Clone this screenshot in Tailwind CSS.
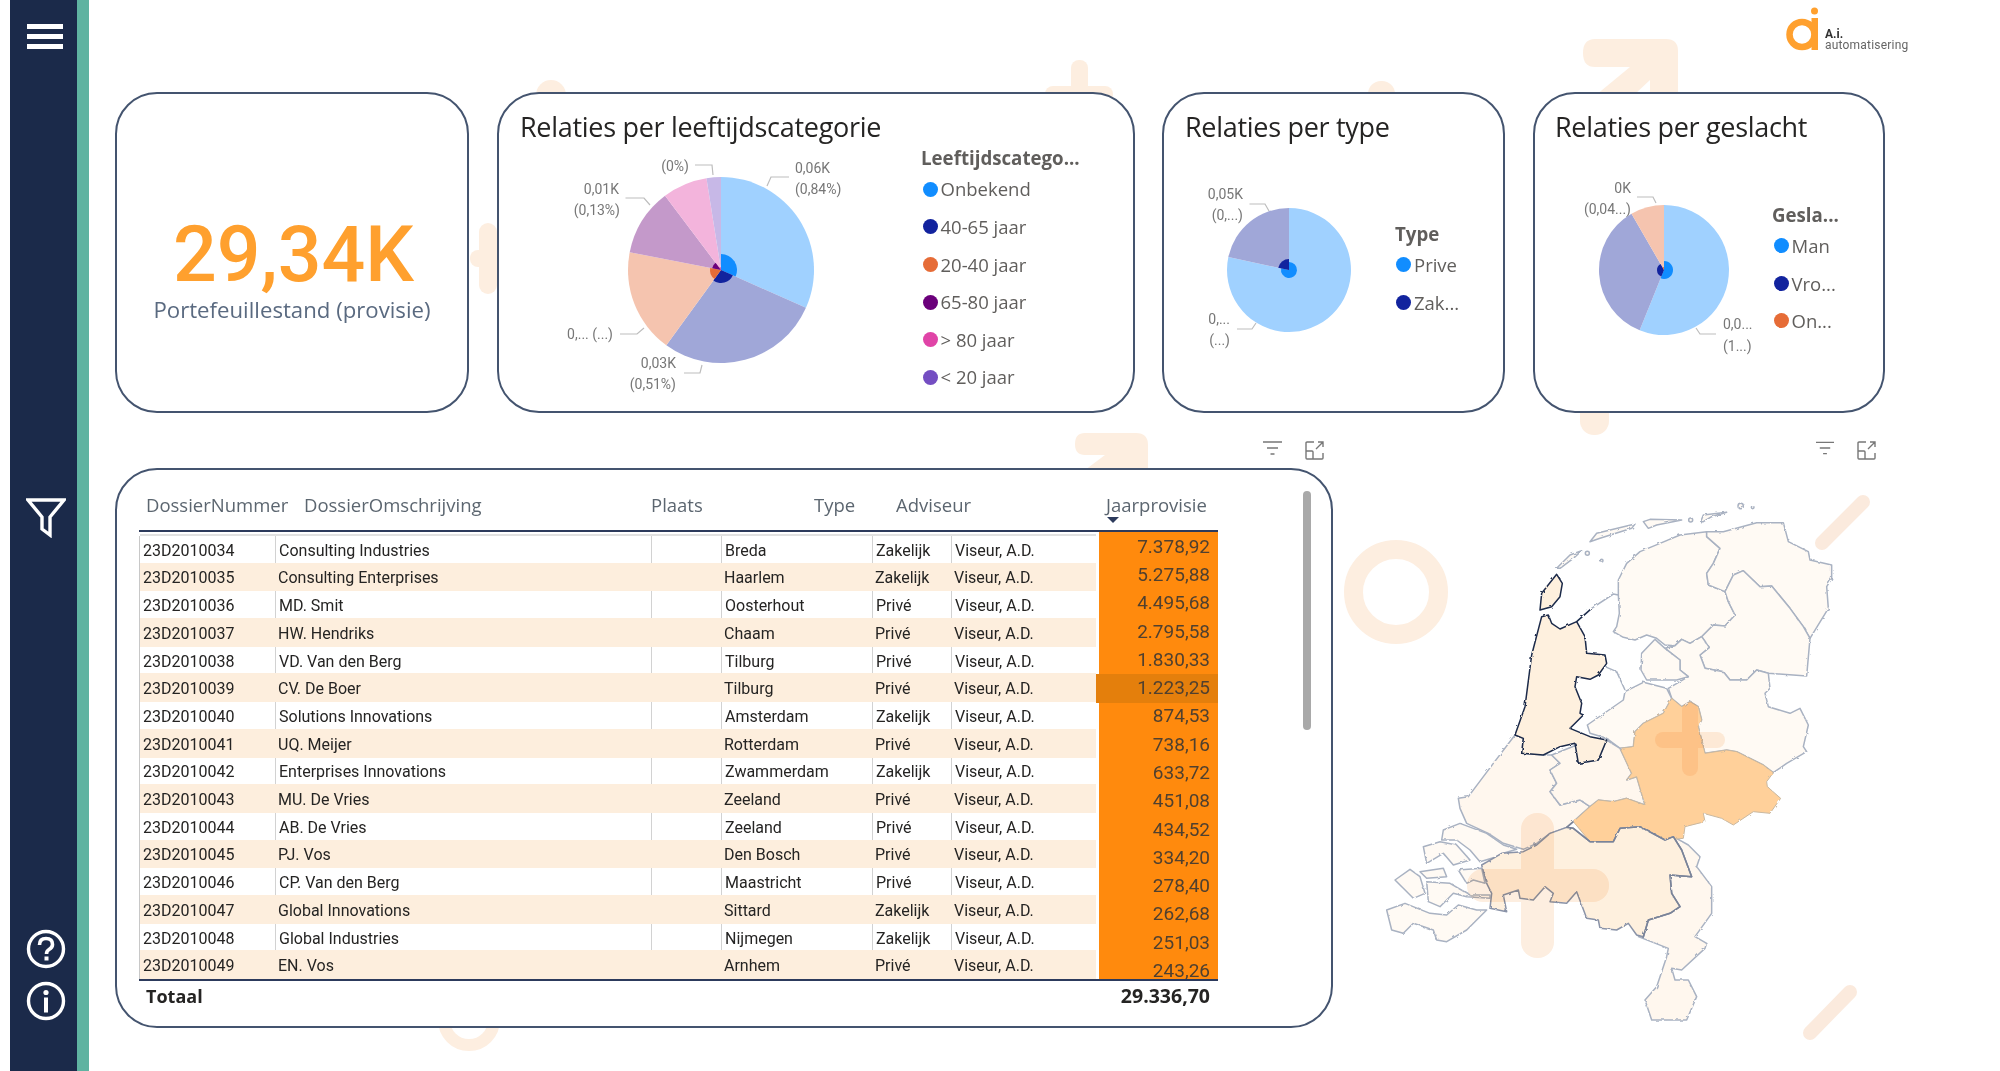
<!DOCTYPE html>
<html lang="en">
<head>
    <meta charset="UTF-8">
    <title>Portefeuille dashboard</title>
    <script src="https://cdn.jsdelivr.net/npm/@tailwindcss/browser@4"></script>
</head>
<body class="bg-white">
<div class="relative isolate flex w-[2000px] h-[1071px] overflow-hidden bg-white font-['Open_Sans',sans-serif]">

    <!-- background shapes -->
    <svg class="absolute left-0 top-0 z-0" width="2000" height="1071" fill="#fdeee0">
        <rect x="1071" y="60" width="17" height="70" rx="8"/><rect x="1045" y="86" width="68" height="17" rx="8"/>
        <rect x="479" y="223" width="18" height="71" rx="9"/><rect x="470" y="250" width="40" height="17" rx="8"/>
        <rect x="536" y="80" width="30" height="60" rx="15"/><rect x="1368" y="81" width="27" height="40" rx="13"/>
        <path d="M1595 39H1666Q1678 39 1678 51V120H1650V80L1607 120 1590 100 1630 67H1595Q1583 67 1583 53T1595 39Z"/>
        <rect x="1580" y="395" width="29" height="40" rx="14"/>
        <path d="M1085 433H1136Q1148 433 1148 445V490H1120V470L1100 490 1085 470 1105 455H1085Q1075 455 1075 444T1085 433Z"/>
        <circle cx="1396" cy="592" r="42.5" fill="none" stroke="#fdeee0" stroke-width="19"/>
        <circle cx="469" cy="1020" r="25" fill="none" stroke="#fdeee0" stroke-width="12"/>
        <path d="M1822 543 1863 502M1810 1033 1850 992" stroke="#fbeadd" stroke-width="14" stroke-linecap="round"/>
        <rect x="1521" y="813" width="33" height="145" rx="16"/><rect x="1467" y="869" width="142" height="33" rx="16"/>
        <rect x="1682" y="702" width="16" height="74" rx="8"/><rect x="1655" y="732" width="70" height="16" rx="8"/>
    </svg>

    <!-- sidebar -->
    <div class="ml-[10px] w-[67px] h-full bg-[#1b2a4a] flex flex-col pl-[17px] pt-[24px] pb-[50px]">
        <div class="flex flex-col gap-[5px] w-[36px]">
            <div class="h-[5px] bg-white"></div>
            <div class="h-[5px] bg-white"></div>
            <div class="h-[5px] bg-white"></div>
        </div>
        <svg class="mt-[448px] -ml-[1px]" width="40" height="41" viewBox="0 0 40 41" fill="none" stroke="white" stroke-width="3.4" stroke-linejoin="miter">
            <path d="M2 3H38L24 20V38L16 32V20Z"/>
        </svg>
        <svg class="mt-auto -ml-[1px]" width="40" height="40" viewBox="0 0 40 40" fill="none" stroke="white">
            <circle cx="20" cy="20" r="17.5" stroke-width="3.4"/>
            <path d="M13.5 16Q13.5 9.5 20 9.5T26.5 15.5Q26.5 18.5 23 20.5 20.500 22 20.500 25" stroke-width="3.6"/>
            <rect x="18.500" y="27.500" width="4" height="4" fill="white" stroke="none"/>
        </svg>
        <svg class="mt-[12px] -ml-[1px]" width="40" height="40" viewBox="0 0 40 40" fill="none" stroke="white">
            <circle cx="20" cy="20" r="17.5" stroke-width="3.4"/>
            <rect x="18" y="16.500" width="4" height="15" fill="white" stroke="none"/>
            <circle cx="20" cy="11.500" r="2.600" fill="white" stroke="none"/>
        </svg>
    </div>
    <div class="w-[12px] h-full bg-[#5fb3a1]"></div>

    <!-- main -->
    <div class="flex-1 pl-[26px] pt-[92px]">

        <!-- logo -->
        <div class="absolute left-[1785px] top-[6px] z-10 flex items-end">
            <svg width="36" height="46" viewBox="1785 6 36 46" fill="none">
                <circle cx="1802" cy="34.500" r="12.500" stroke="#ffa02e" stroke-width="6.500"/>
                <rect x="1811.500" y="18" width="6.500" height="32" fill="#ffa02e"/>
                <circle cx="1814.500" cy="11" r="3.500" fill="#ffa02e"/>
            </svg>
            <div class="ml-[4px] mb-[1px] font-['Roboto',sans-serif] text-[#666] leading-[11px]">
                <div class="text-[12px] font-bold text-[#333]">A.i.</div>
                <div class="text-[12px] tracking-[0.2px]">automatisering</div>
            </div>
        </div>

        <!-- top cards -->
        <div class="flex h-[321px] text-[#252423]">
            <div class="relative z-10 w-[354px] h-full bg-white border-2 border-[#44546f] rounded-[42px] flex flex-col items-center">
                <div class="mt-[125px] font-['Roboto',sans-serif] font-medium text-[77px] leading-[72px] text-[#ffa02e] pl-[3px]">29,34K</div>
                <div class="mt-[4px] text-[22.2px] leading-[30px] text-[#5a6a80]">Portefeuillestand (provisie)</div>
            </div>

            <div class="relative z-10 ml-[28px] w-[638px] h-full bg-white border-2 border-[#44546f] rounded-[42px]">
                <div class="pl-[21px] pt-[14px] text-[27px] leading-[38px] tracking-[-0.3px]">Relaties per leeftijdscategorie</div>
                <div class="flex">
                    <svg id="pie-age" width="420" height="265" viewBox="499 146 420 265" class="shrink-0 font-['Roboto',sans-serif] text-[14px]" fill="#777">
                        <g fill="none" stroke="#bdbdbd" stroke-width="1.200">
                            <path d="M767 186 771 177H789M625.500 198H644L650 205M695 165H712L713 175M620 334H637L644 328M684 373H700L702 365"/>
                        </g>
                        <text x="795" y="173">0,06K</text><text x="795" y="194">(0,84%)</text>
                        <text x="619" y="194" text-anchor="end">0,01K</text><text x="620" y="215" text-anchor="end">(0,13%)</text>
                        <text x="689" y="171" text-anchor="end">(0%)</text>
                        <text x="613" y="339" text-anchor="end">0,... (...)</text>
                        <text x="676" y="368" text-anchor="end">0,03K</text><text x="676" y="389" text-anchor="end">(0,51%)</text>
                    </svg>
                    <div class="pl-[2px] text-[#605e5c]">
                        <div class="text-[18.7px] leading-[24px] font-bold">Leeftijdscatego...</div>
                        <div class="flex items-center h-[37.6px] pt-[1px] text-[18.500px]"><span class="w-[15px] h-[15px] rounded-full bg-[#118dff] ml-[1.500px] mr-[3px]"></span>Onbekend</div>
                        <div class="flex items-center h-[37.6px] pt-[1px] text-[18.500px]"><span class="w-[15px] h-[15px] rounded-full bg-[#12239e] ml-[1.500px] mr-[3px]"></span>40-65 jaar</div>
                        <div class="flex items-center h-[37.6px] pt-[1px] text-[18.500px]"><span class="w-[15px] h-[15px] rounded-full bg-[#e66c37] ml-[1.500px] mr-[3px]"></span>20-40 jaar</div>
                        <div class="flex items-center h-[37.6px] pt-[1px] text-[18.500px]"><span class="w-[15px] h-[15px] rounded-full bg-[#6b007b] ml-[1.500px] mr-[3px]"></span>65-80 jaar</div>
                        <div class="flex items-center h-[37.6px] pt-[1px] text-[18.500px]"><span class="w-[15px] h-[15px] rounded-full bg-[#e044a7] ml-[1.500px] mr-[3px]"></span>&gt; 80 jaar</div>
                        <div class="flex items-center h-[37.6px] pt-[1px] text-[18.500px]"><span class="w-[15px] h-[15px] rounded-full bg-[#744ec2] ml-[1.500px] mr-[3px]"></span>&lt; 20 jaar</div>
                    </div>
                </div>
            </div>

            <div class="relative z-10 ml-[27px] w-[343px] h-full bg-white border-2 border-[#44546f] rounded-[42px]">
                <div class="pl-[21px] pt-[14px] text-[27px] leading-[38px] tracking-[-0.3px]">Relaties per type</div>
                <div class="flex">
                    <svg id="pie-type" width="223" height="265" viewBox="1164 146 223 265" class="shrink-0 font-['Roboto',sans-serif] text-[14px]" fill="#777">
                        <path d="M1249.500 204H1265L1269 211M1237 329H1252L1256 323" fill="none" stroke="#bdbdbd" stroke-width="1.200"/>
                        <text x="1243" y="199" text-anchor="end">0,05K</text><text x="1243" y="220" text-anchor="end">(0,...)</text>
                        <text x="1230" y="324" text-anchor="end">0,...</text><text x="1230" y="345" text-anchor="end">(...)</text>
                    </svg>
                    <div class="pl-[8px] pt-[76px] text-[#605e5c]">
                        <div class="text-[18.7px] leading-[24px] font-bold">Type</div>
                        <div class="flex items-center h-[37.6px] text-[18.500px]"><span class="w-[15px] h-[15px] rounded-full bg-[#118dff] ml-[1px] mr-[3px]"></span>Prive</div>
                        <div class="flex items-center h-[37.6px] text-[18.500px]"><span class="w-[15px] h-[15px] rounded-full bg-[#12239e] ml-[1px] mr-[3px]"></span>Zak...</div>
                    </div>
                </div>
            </div>

            <div class="relative z-10 ml-[28px] w-[352px] h-full bg-white border-2 border-[#44546f] rounded-[42px]">
                <div class="pl-[20px] pt-[14px] text-[27px] leading-[38px] tracking-[-0.3px]">Relaties per geslacht</div>
                <div class="flex">
                    <svg id="pie-sex" width="237" height="265" viewBox="1535 146 237 265" class="shrink-0 font-['Roboto',sans-serif] text-[14px]" fill="#777">
                        <path d="M1637 197H1653L1656 203M1696 328 1700 334H1716" fill="none" stroke="#bdbdbd" stroke-width="1.200"/>
                        <text x="1631" y="193" text-anchor="end">0K</text><text x="1631" y="214" text-anchor="end">(0,04...)</text>
                        <text x="1723" y="329">0,0...</text><text x="1723" y="351">(1...)</text>
                    </svg>
                    <div class="pt-[57px] text-[#605e5c]">
                        <div class="text-[18.7px] leading-[24px] font-bold">Gesla...</div>
                        <div class="flex items-center h-[37.6px] text-[18.500px]"><span class="w-[15px] h-[15px] rounded-full bg-[#118dff] ml-[1.500px] mr-[3px]"></span>Man</div>
                        <div class="flex items-center h-[37.6px] text-[18.500px]"><span class="w-[15px] h-[15px] rounded-full bg-[#12239e] ml-[1.500px] mr-[3px]"></span>Vro...</div>
                        <div class="flex items-center h-[37.6px] text-[18.500px]"><span class="w-[15px] h-[15px] rounded-full bg-[#e66c37] ml-[1.500px] mr-[3px]"></span>On...</div>
                    </div>
                </div>
            </div>
        </div>

        <div class="flex">
            <!-- table column -->
            <div class="w-[1218px] shrink-0">
                <div class="relative z-10 h-[55px] flex justify-end items-end gap-[23px] pr-[9px] pb-[8px]">
                    <svg class="mb-[5px]" width="19" height="14" viewBox="0 0 19 14" fill="none" stroke="#777" stroke-width="1.400"><path d="M0 1H19M4 7H15M7.500 13H11.500"/></svg>
                    <svg width="19" height="19" viewBox="0 0 19 19" fill="none" stroke="#777" stroke-width="1.400"><path d="M9 1H2Q1 1 1 2V17Q1 18 2 18H17Q18 18 18 17V12M1 10H7Q8 10 8 11V18M11 8 18 1M13 1H18V6"/></svg>
                </div>
                <div class="relative z-10 h-[560px] bg-white border-2 border-[#44546f] rounded-[42px] pl-[22px] font-['Roboto',sans-serif]">
                    <div class="flex h-[62px] w-[1079px] pt-[10px] items-center border-b-2 border-[#2c3a5c] text-[18.500px] text-[#5c6670] font-['Open_Sans',sans-serif]">
                        <div class="w-[158px] pl-[7px]">DossierNummer</div>
                        <div class="w-[347px] pl-[7px]">DossierOmschrijving</div>
                        <div class="w-[163px] pl-[7px]">Plaats</div>
                        <div class="w-[82px] pl-[7px]">Type</div>
                        <div class="w-[210px] pl-[7px]">Adviseur</div>
                        <div class="relative w-[119px] pl-[7px]">Jaarprovisie
                            <svg class="absolute left-[8px] top-[26px]" width="12" height="6"><path d="M0 0H12L6 6Z" fill="#2c3a5c"/></svg>
                        </div>
                    </div>
                    <div class="flex h-[447px] w-[1079px] overflow-hidden">
                        <div class="w-[957px] pt-[2px] shrink-0">
                            <div class="h-[2px] ml-[1px] bg-[#e1e1e1]"></div>
                            <div id="rows" class="text-[16px] text-[#252423]"></div>
                        </div>
                        <div id="amounts" class="ml-[3px] w-[119px] h-full bg-[#ff8a0d] pt-[1px] text-[19px] text-[#50402f]"></div>
                    </div>
                    <div class="flex items-center h-[32px] w-[1079px] border-t-2 border-[#2c3a5c] font-bold text-[#252423] pl-[7px] pr-[8px] justify-between font-['Open_Sans',sans-serif]">
                        <span class="text-[18px]">Totaal</span><span class="text-[19.500px]">29.336,70</span>
                    </div>
                    <div class="absolute right-[20px] top-[21px] w-[8px] h-[239px] rounded-full bg-[#a9a9a9]"></div>
                </div>
            </div>

            <!-- map column -->
            <div class="flex-1">
                <div class="relative z-10 h-[55px] flex justify-end items-end gap-[23px] pr-[124px] pb-[8px]">
                    <svg class="mb-[5px]" width="18" height="14" viewBox="0 0 19 14" fill="none" stroke="#777" stroke-width="1.400"><path d="M0 1H19M4 7H15M7.500 13H11.500"/></svg>
                    <svg width="19" height="19" viewBox="0 0 19 19" fill="none" stroke="#777" stroke-width="1.400"><path d="M9 1H2Q1 1 1 2V17Q1 18 2 18H17Q18 18 18 17V12M1 10H7Q8 10 8 11V18M11 8 18 1M13 1H18V6"/></svg>
                </div>
                <svg class="relative z-10 mix-blend-multiply ml-[27px] mt-[12px]" width="520" height="591" viewBox="0 0 1560 1773" stroke-linejoin="round">
                    <defs>
                        <filter id="rough" x="-5%" y="-5%" width="110%" height="110%">
                            <feTurbulence type="fractalNoise" baseFrequency="0.07" numOctaves="2" seed="4"/>
                            <feDisplacementMap in="SourceGraphic" scale="8"/>
                        </filter>
                    </defs>
                    <g filter="url(#rough)" stroke="#a9b2c2" stroke-width="4.500" fill="#fffaf4">
                        <polygon points="1040,155 960,165 900,190 840,215 800,250 775,300 775,345 778,400 770,440 760,455 790,472 825,480 860,465 890,475 915,495 945,497 965,478 990,490 1025,470 1060,435 1095,438 1125,405 1105,365 1095,335 1045,315 1040,280 1060,250 1080,205 1040,170"/>
                        <polygon points="1040,155 1090,155 1190,128 1270,128 1285,185 1345,215 1350,240 1415,255 1415,295 1400,320 1405,385 1350,475 1330,440 1290,385 1235,318 1200,320 1150,272 1120,285 1095,335 1045,315 1040,280 1060,250 1080,205 1040,170"/>
                        <polygon points="1095,335 1120,285 1150,272 1200,320 1235,318 1290,385 1330,440 1350,475 1340,588 1225,580 1190,570 1160,600 1110,600 1090,575 1035,565 1020,525 1048,502 1025,470 1060,435 1095,438 1125,405 1105,365"/>
                        <polygon points="1025,470 1048,502 1020,525 1035,565 1090,575 1110,600 1160,600 1190,570 1225,580 1230,625 1215,640 1225,680 1290,700 1320,685 1345,735 1330,800 1340,815 1280,850 1240,878 1210,855 1130,815 1100,810 1035,820 1015,740 1025,720 1015,680 990,665 965,680 935,655 925,625 985,590 960,570 960,540 915,505 945,497 965,478 990,490"/>
                        <polygon points="845,520 885,478 915,505 960,540 960,570 985,590 950,600 860,600 843,570"/>
                        <polygon points="682,735 790,660 795,635 850,607 920,625 935,655 910,700 850,730 825,755 820,800 780,805 740,775 690,760"/>
                        <polygon points="590,265 630,225 665,212 640,235 600,265"/>
                        <polygon points="690,185 710,160 825,132 815,145 720,175"/>
                        <polygon points="850,125 870,118 965,120 890,135 865,145"/>
                        <polygon points="1022,125 1030,105 1100,97 1055,110 1030,125"/>
                        <circle cx="1142" cy="78" r="8"/><circle cx="1178" cy="82" r="4"/><circle cx="725" cy="242" r="4"/><circle cx="682" cy="220" r="6"/><circle cx="992" cy="120" r="6"/>
                        <path d="M695 385 760 342 775 345M735 560 770 575 795 630" fill="none"/>
                        <polygon fill="#fff7ee" points="465,765 490,775 485,820 550,825 575,825 600,850 570,870 590,910 570,935 600,975 660,960 690,980 640,1025 620,1042 570,1060 530,1090 490,1108 430,1090 385,1060 320,1030 300,985 295,955 325,950 400,850"/>
                        <polygon fill="#fff7ee" points="575,825 650,795 655,850 715,840 740,780 780,805 815,880 800,900 830,890 855,975 800,955 760,965 715,960 690,980 660,960 600,975 570,935 590,910 570,870 600,850"/>
                        <polygon points="250,1050 300,1030 380,1060 430,1095 470,1108 430,1120 410,1130 360,1145 330,1110 290,1080 245,1080"/>
                        <polygon points="190,1100 240,1085 290,1095 330,1140 280,1155 250,1120 200,1150"/>
                        <polygon points="180,1175 250,1165 260,1190 200,1195"/>
                        <polygon points="105,1200 150,1168 180,1190 195,1240 160,1255"/>
                        <polygon points="200,1205 270,1210 330,1245 390,1245 390,1255 320,1250 280,1240 240,1280 205,1265"/>
                        <polygon points="295,1170 365,1165 375,1210 340,1200 320,1210"/>
                        <polygon points="80,1290 135,1270 210,1300 260,1305 295,1275 350,1290 380,1290 320,1350 260,1385 230,1380 220,1350 160,1330 130,1360 95,1350"/>
                        <polygon fill="#fff7ee" points="940,1070 985,1095 1020,1130 1010,1160 1055,1220 1055,1300 1005,1370 1040,1390 1035,1405 965,1470 935,1465 945,1500 985,1500 1010,1550 980,1620 875,1620 855,1560 890,1520 920,1430 925,1405 835,1370 850,1370 865,1320 930,1300 960,1280 935,1240 930,1185 995,1190 965,1110"/>
                        <polygon fill="#ffd09a" stroke="#c9b8a0" stroke-width="3" points="935,655 965,680 990,665 1015,680 1025,720 1015,740 1035,820 1100,810 1130,815 1210,855 1240,878 1220,905 1222,920 1262,955 1230,1000 1180,995 1120,1035 1085,1015 1030,1000 1035,1025 975,1040 970,1075 915,1080 840,1040 780,1045 760,1085 690,1085 640,1025 690,980 715,960 760,965 800,955 855,975 830,890 800,900 815,880 780,805 820,800 825,755 850,730 910,700"/>
                        <polygon fill="#fef0de" stroke="#8a93a8" points="365,1155 425,1120 490,1115 530,1095 570,1060 620,1042 640,1045 690,1085 760,1085 780,1045 840,1040 915,1080 940,1070 965,1110 995,1190 930,1185 935,1240 960,1280 930,1300 865,1320 850,1370 830,1365 805,1330 770,1350 720,1345 715,1320 680,1315 650,1235 620,1270 570,1265 580,1240 555,1220 520,1260 480,1255 475,1230 430,1245 440,1295 390,1285 395,1240 380,1210"/>
                        <path d="M640 1025 620 1042 640 1045 690 1085 760 1085 780 1045 840 1040 915 1080 940 1070 965 1110 995 1190 930 1185 935 1240 960 1280 930 1300 865 1320 850 1370" fill="none" stroke="#7a8398"/>
                        <g fill="#fef0de" stroke="#1b2a4a">
                            <polygon points="545,410 565,405 575,430 600,447 650,425 675,470 680,520 735,525 740,550 715,585 690,598 650,590 645,620 665,670 660,700 670,705 640,735 630,745 690,770 740,780 715,840 655,850 645,790 600,800 550,825 485,820 490,775 465,765 495,680 515,525"/>
                            <polygon points="590,283 607,310 600,350 575,380 540,390 545,340"/>
                            <path d="M650 425 695 385" fill="none"/>
                        </g>
                    </g>
                </svg>
            </div>
        </div>
    </div>
</div>

<script>
    const blue = '#118dff', navy = '#12239e', orange = '#e66c37', purple = '#6b007b', pink = '#e044a7', violet = '#744ec2';
    const light = { [blue]: '#a0d1ff', [navy]: '#a0a7d8', [orange]: '#f5c4af', [purple]: '#c499ca', [pink]: '#f3b4dc', [violet]: '#c7b8e7' };

    function slice(cx, cy, r, from, to, fill) {
        const pt = a => [cx + r * Math.sin(a * Math.PI / 180), cy - r * Math.cos(a * Math.PI / 180)].map(n => n.toFixed(2)).join(' ');
        const large = to - from > 180 ? 1 : 0;
        return `<path d="M${cx} ${cy}L${pt(from)}A${r} ${r} 0 ${large} 1 ${pt(to)}Z" fill="${fill}"/>`;
    }

    // slices: [colour, end angle, inner radius]
    function drawPie(id, cx, cy, r, slices) {
        let from = 0, outer = '', inner = '';
        slices.forEach(([color, to, small]) => {
            outer += slice(cx, cy, r, from, to, light[color]);
            inner += slice(cx, cy, small, from, to, color);
            from = to;
        });
        document.getElementById(id).insertAdjacentHTML('beforeend', outer + inner);
    }

    drawPie('pie-age', 721, 270, 93, [[blue, 114, 16], [navy, 216, 13], [orange, 281, 11], [purple, 323, 9], [pink, 351, 3], [violet, 360, 2]]);
    drawPie('pie-type', 1289, 270, 62, [[blue, 282, 8], [navy, 360, 11]]);
    drawPie('pie-sex', 1664, 270, 65, [[blue, 202, 9], [navy, 330, 7], [orange, 360, 3]]);

    const data = [
        ['23D2010034', 'Consulting Industries', 'Breda', 'Zakelijk', '7.378,92'],
        ['23D2010035', 'Consulting Enterprises', 'Haarlem', 'Zakelijk', '5.275,88'],
        ['23D2010036', 'MD. Smit', 'Oosterhout', 'Privé', '4.495,68'],
        ['23D2010037', 'HW. Hendriks', 'Chaam', 'Privé', '2.795,58'],
        ['23D2010038', 'VD. Van den Berg', 'Tilburg', 'Privé', '1.830,33'],
        ['23D2010039', 'CV. De Boer', 'Tilburg', 'Privé', '1.223,25'],
        ['23D2010040', 'Solutions Innovations', 'Amsterdam', 'Zakelijk', '874,53'],
        ['23D2010041', 'UQ. Meijer', 'Rotterdam', 'Privé', '738,16'],
        ['23D2010042', 'Enterprises Innovations', 'Zwammerdam', 'Zakelijk', '633,72'],
        ['23D2010043', 'MU. De Vries', 'Zeeland', 'Privé', '451,08'],
        ['23D2010044', 'AB. De Vries', 'Zeeland', 'Privé', '434,52'],
        ['23D2010045', 'PJ. Vos', 'Den Bosch', 'Privé', '334,20'],
        ['23D2010046', 'CP. Van den Berg', 'Maastricht', 'Privé', '278,40'],
        ['23D2010047', 'Global Innovations', 'Sittard', 'Zakelijk', '262,68'],
        ['23D2010048', 'Global Industries', 'Nijmegen', 'Zakelijk', '251,03'],
        ['23D2010049', 'EN. Vos', 'Arnhem', 'Privé', '243,26']
    ];

    document.getElementById('rows').innerHTML = data.map((d, i) => {
        const odd = i % 2 === 1;
        const rowClass = odd ? 'h-[28.8px] bg-[#fdeedd]' : 'h-[26.6px]';
        const cellClass = odd ? 'pl-[3px]' : 'pl-[3px] border-l border-[#d2d2d2]';
        return `<div class="flex items-stretch ${rowClass}">
            <div class="w-[136px] pl-[3px] border-l border-[#c8c8c8] flex items-center pt-[3px]">${d[0]}</div>
            <div class="w-[376px] ${cellClass} flex items-center pt-[3px]">${d[1]}</div>
            <div class="w-[70px] ${cellClass} flex items-center pt-[3px]"></div>
            <div class="w-[151px] ${cellClass} flex items-center pt-[3px]">${d[2]}</div>
            <div class="w-[79px] ${cellClass} flex items-center pt-[3px]">${d[3]}</div>
            <div class="w-[145px] ${cellClass} flex items-center pt-[3px]">Viseur, A.D.</div>
        </div>`;
    }).join('');

    document.getElementById('amounts').innerHTML = data.map((d, i) => {
        const active = i === 5 ? 'bg-[#e47f0c] -ml-[3px]' : '';
        return `<div class="h-[28.27px] shrink-0 flex items-center justify-end pr-[8px] ${active}">${d[4]}</div>`;
    }).join('');
</script>
</body>
</html>
